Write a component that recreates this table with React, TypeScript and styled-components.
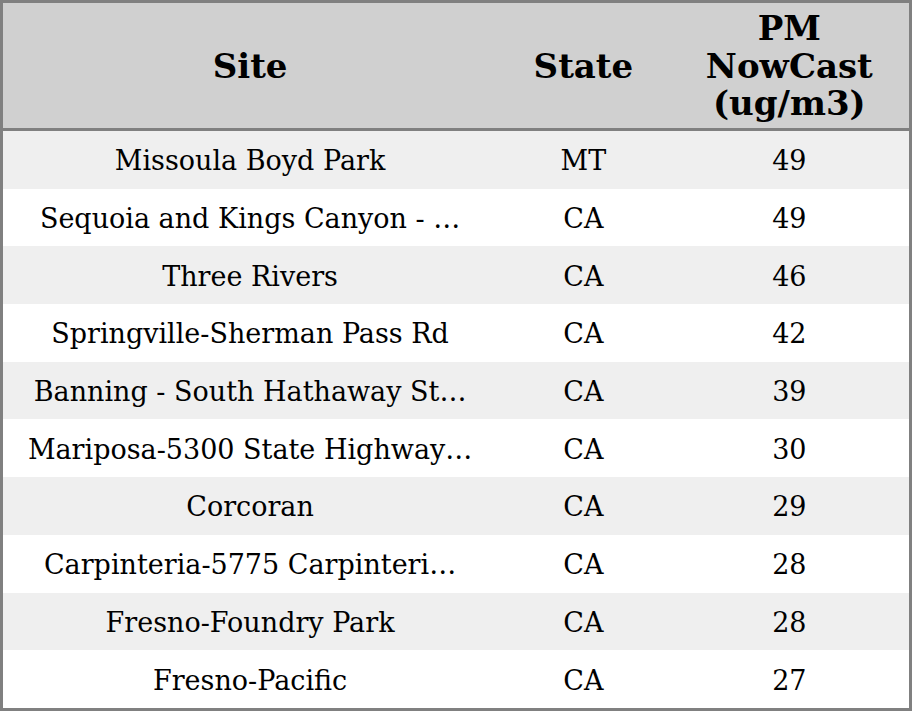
import React from "react";
import styled, { createGlobalStyle } from "styled-components";

const GlobalStyle = createGlobalStyle`
  html, body {
    margin: 0;
    padding: 0;
    background: #ffffff;
  }
  body {
    font-family: "DejaVu Serif", serif;
  }
`;

type Row = { site: string; state: string; pm: number };

const rows: Row[] = [
  { site: "Missoula Boyd Park", state: "MT", pm: 49 },
  { site: "Sequoia and Kings Canyon - Ash Mountain", state: "CA", pm: 49 },
  { site: "Three Rivers", state: "CA", pm: 46 },
  { site: "Springville-Sherman Pass Rd", state: "CA", pm: 42 },
  { site: "Banning - South Hathaway Street", state: "CA", pm: 39 },
  { site: "Mariposa-5300 State Highway 49 North", state: "CA", pm: 30 },
  { site: "Corcoran", state: "CA", pm: 29 },
  { site: "Carpinteria-5775 Carpinteria Ave", state: "CA", pm: 28 },
  { site: "Fresno-Foundry Park", state: "CA", pm: 28 },
  { site: "Fresno-Pacific", state: "CA", pm: 27 },
];

// site names are cut to 27 characters
const shorten = (s: string, max = 27) =>
  s.length > max ? s.slice(0, max) + "…" : s;

const Table = styled.table`
  width: 912px;
  height: 711px;
  box-sizing: border-box;
  border: 3px solid #808080;
  border-collapse: collapse;
  table-layout: fixed;
  color: #000;
`;

const HeadCell = styled.th`
  height: 123px;
  padding: 2px 8px 0;
  background: #d0d0d0;
  border-bottom: 3px solid #808080;
  font-size: 34px;
  font-weight: bold;
  line-height: 37.5px;
  text-align: center;
  vertical-align: middle;
`;

const BodyRow = styled.tr<{ $odd: boolean }>`
  background: ${(p) => (p.$odd ? "#efefef" : "#ffffff")};
`;

const Cell = styled.td`
  height: 55px;
  padding: 2px 8px 0;
  font-size: 27px;
  text-align: center;
  vertical-align: middle;
  white-space: nowrap;
  overflow: hidden;
`;

export default function App() {
  return (
    <>
      <GlobalStyle />
      <Table>
        <colgroup>
          <col style={{ width: 494 }} />
          <col style={{ width: 172 }} />
          <col style={{ width: 240 }} />
        </colgroup>
        <thead>
          <tr>
            <HeadCell>Site</HeadCell>
            <HeadCell>State</HeadCell>
            <HeadCell>PM NowCast (ug/m3)</HeadCell>
          </tr>
        </thead>
        <tbody>
          {rows.map((r, i) => (
            <BodyRow key={i} $odd={i % 2 === 0}>
              <Cell>{shorten(r.site)}</Cell>
              <Cell>{r.state}</Cell>
              <Cell>{r.pm}</Cell>
            </BodyRow>
          ))}
        </tbody>
      </Table>
    </>
  );
}
